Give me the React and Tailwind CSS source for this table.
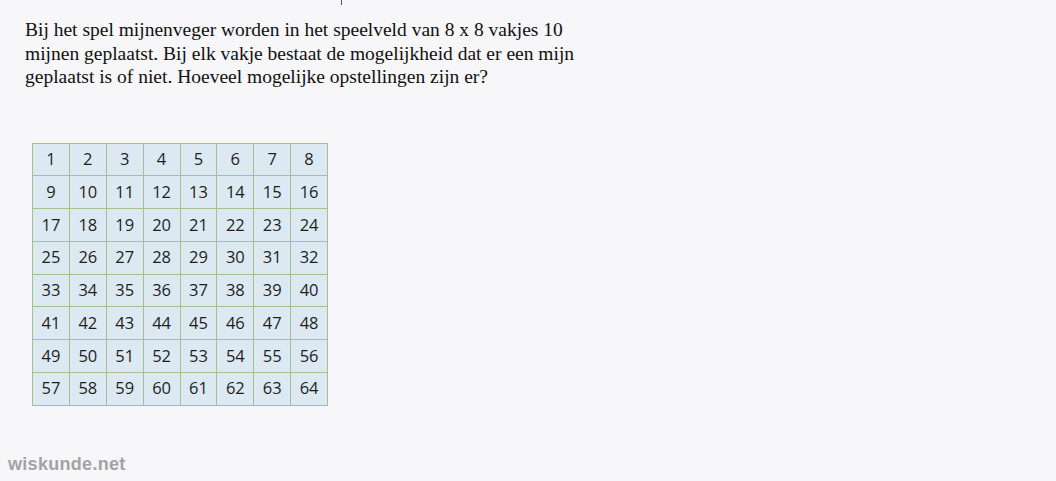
import React from 'react';

const rows = Array.from({ length: 8 }, (_, r) => Array.from({ length: 8 }, (_, c) => r * 8 + c + 1));

const App = () => {
    return (
        <div className="w-[1056px] h-[481px] bg-[#f7f6f8] flex flex-col overflow-hidden">
            {/* kleine streep bovenaan */}
            <div className="ml-[341px] w-px h-[5px] bg-[#555]"></div>

            {/* vraag */}
            <p className="ml-[25px] mt-[13px] text-[19.5px] leading-[23.5px] text-[#111] font-['Liberation_Serif',serif] whitespace-nowrap">
                Bij het spel mijnenveger worden in het speelveld van 8 x 8 vakjes 10
                <br />
                mijnen geplaatst. Bij elk vakje bestaat de mogelijkheid dat er een mijn
                <br />
                geplaatst is of niet. Hoeveel mogelijke opstellingen zijn er?
            </p>

            {/* speelveld */}
            <div className="ml-[32px] mt-[54px] w-[296px] grid grid-cols-8 border-l border-t border-[#a6bf8e] bg-[#dde9f2]">
                {rows.flat().map((n) => (
                    <div
                        key={n}
                        className="h-[32.75px] flex items-center justify-center border-r border-b border-[#a6bf8e] text-[16.5px] text-[#1e1e1e] font-['Open_Sans',sans-serif]"
                    >
                        {n}
                    </div>
                ))}
            </div>

            {/* logo */}
            <div className="ml-[8px] mt-[45px] text-[18px] font-bold text-[#a3a3a6] font-['Liberation_Sans',sans-serif] tracking-[0.3px]">
                wiskunde.net
            </div>
        </div>
    );
};

export default App;
